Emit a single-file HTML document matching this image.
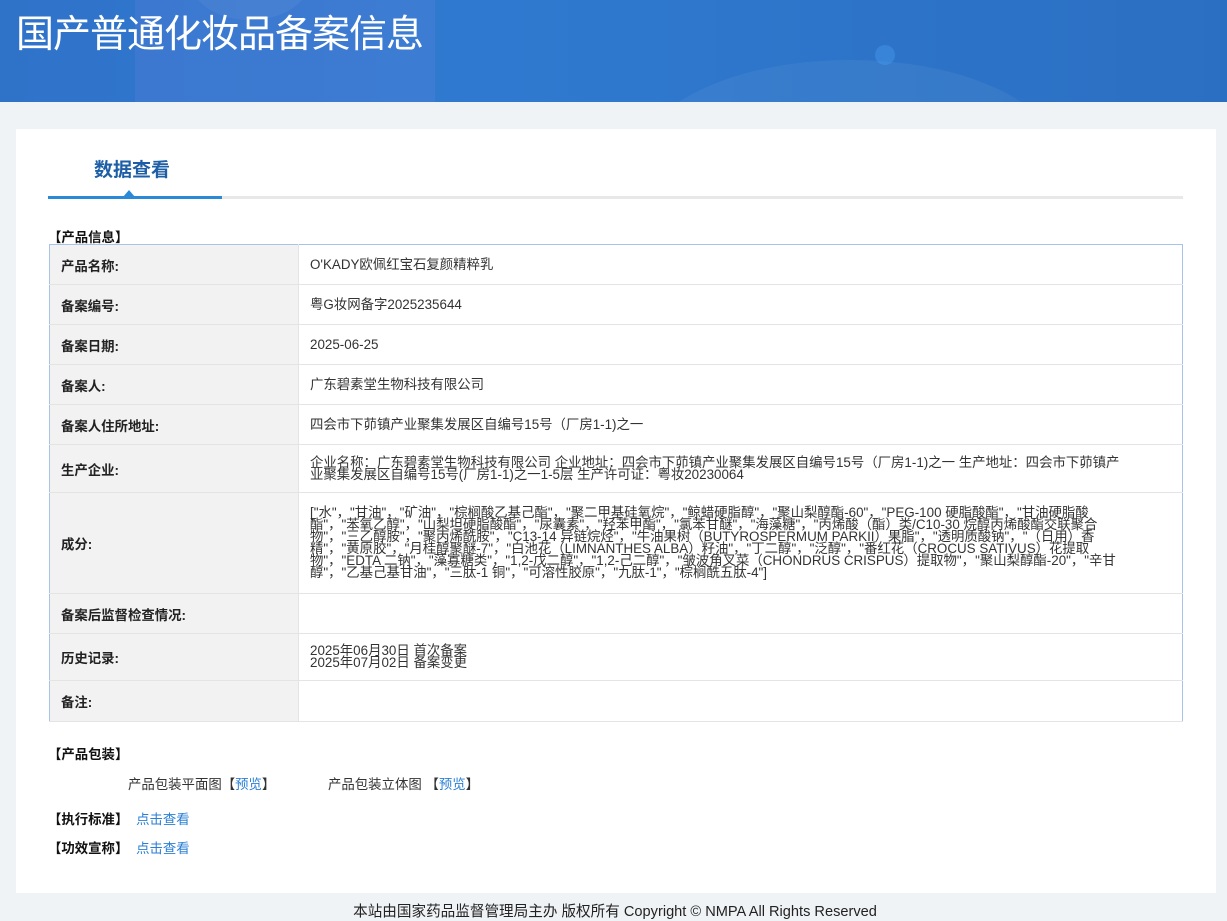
<!DOCTYPE html>
<html><head><meta charset="utf-8"><style>
*{margin:0;padding:0;box-sizing:border-box}
body{width:1227px;height:920px;background:#eff3f6;font-family:"Liberation Sans","Noto Sans CJK SC",sans-serif;font-size:13.4px;color:#333;position:relative;overflow:hidden}
.hd{position:absolute;left:0;top:0;width:1227px;height:102px;background:linear-gradient(90deg,#2f73c9 0%,#2f7ad0 40%,#2b6fc2 100%);overflow:hidden}
.hd h1{position:absolute;left:16px;top:3px;font-size:38px;font-weight:normal;color:#fff;letter-spacing:-1px;font-family:"Noto Sans CJK SC",sans-serif}
.blob{position:absolute;border-radius:50%;background:rgba(255,255,255,.05)}
.card{position:absolute;left:16px;top:129px;width:1200px;height:764px;background:#fff}
.tab{position:absolute;left:78px;top:26px;font-size:19px;font-weight:bold;color:#1d5ea6;font-family:"Noto Sans CJK SC",sans-serif}
.line{position:absolute;left:32px;top:67px;width:1135px;height:3px;background:#e8e8e8}
.line b{position:absolute;left:0;top:0;width:174px;height:3px;background:#2a8ad8}
.tri{position:absolute;left:107px;top:61px;width:0;height:0;border-left:6px solid transparent;border-right:6px solid transparent;border-bottom:7px solid #2a8ad8}
.st{position:absolute;left:32px;font-weight:bold;color:#111}
table{position:absolute;left:33px;top:115px;width:1134px;border-collapse:collapse;border:1px solid #a9c3e8}
td{border-bottom:1px solid #e4e4e4;vertical-align:middle;padding:0 11px}
td.l{width:249px;background:#f2f2f2;font-weight:bold;color:#222;border-right:1px solid #e4e4e4}
td.v{line-height:12px}
a{color:#2a7fd4;text-decoration:none}
.ft{position:absolute;top:900px;left:0;width:1227px;text-align:center;font-size:14.6px;color:#222;padding-left:3px}
</style></head><body>
<div class="hd">
<div class="blob" style="left:135px;top:-20px;width:300px;height:140px;border-radius:0;background:rgba(120,140,230,.18)"></div>
<div class="blob" style="left:190px;top:-60px;width:120px;height:80px"></div>
<div class="blob" style="left:640px;top:60px;width:420px;height:200px"></div>
<div class="blob" style="left:875px;top:45px;width:20px;height:20px;background:rgba(80,170,255,.3)"></div>
<h1>国产普通化妆品备案信息</h1>
</div>
<div class="card">
<div class="tab">数据查看</div>
<div class="line"><b></b></div>
<div class="tri"></div>
<div class="st" style="top:97px">【产品信息】</div>
<table>
<tr style="height:40px"><td class="l">产品名称:</td><td class="v">O'KADY欧佩红宝石复颜精粹乳</td></tr>
<tr style="height:40px"><td class="l">备案编号:</td><td class="v">粤G妆网备字2025235644</td></tr>
<tr style="height:40px"><td class="l">备案日期:</td><td class="v">2025-06-25</td></tr>
<tr style="height:40px"><td class="l">备案人:</td><td class="v">广东碧素堂生物科技有限公司</td></tr>
<tr style="height:40px"><td class="l">备案人住所地址:</td><td class="v">四会市下茆镇产业聚集发展区自编号15号（厂房1-1)之一</td></tr>
<tr style="height:48px"><td class="l">生产企业:</td><td class="v">企业名称：广东碧素堂生物科技有限公司 企业地址：四会市下茆镇产业聚集发展区自编号15号（厂房1-1)之一 生产地址：四会市下茆镇产<br>业聚集发展区自编号15号(厂房1-1)之一1-5层 生产许可证：粤妆20230064</td></tr>
<tr style="height:101px"><td class="l">成分:</td><td class="v">["水"，"甘油"，"矿油"，"棕榈酸乙基己酯"，"聚二甲基硅氧烷"，"鲸蜡硬脂醇"，"聚山梨醇酯-60"，"PEG-100 硬脂酸酯"，"甘油硬脂酸<br>酯"，"苯氧乙醇"，"山梨坦硬脂酸酯"，"尿囊素"，"羟苯甲酯"，"氯苯甘醚"，"海藻糖"，"丙烯酸（酯）类/C10-30 烷醇丙烯酸酯交联聚合<br>物"，"三乙醇胺"，"聚丙烯酰胺"，"C13-14 异链烷烃"，"牛油果树（BUTYROSPERMUM PARKII）果脂"，"透明质酸钠"，"（日用）香<br>精"，"黄原胶"，"月桂醇聚醚-7"，"白池花（LIMNANTHES ALBA）籽油"，"丁二醇"，"泛醇"，"番红花（CROCUS SATIVUS）花提取<br>物"，"EDTA 二钠"，"藻寡糖类"，"1,2-戊二醇"，"1,2-己二醇"，"皱波角叉菜（CHONDRUS CRISPUS）提取物"，"聚山梨醇酯-20"，"辛甘<br>醇"，"乙基己基甘油"，"三肽-1 铜"，"可溶性胶原"，"九肽-1"，"棕榈酰五肽-4"]</td></tr>
<tr style="height:40px"><td class="l">备案后监督检查情况:</td><td class="v"></td></tr>
<tr style="height:47px"><td class="l">历史记录:</td><td class="v">2025年06月30日 首次备案<br>2025年07月02日 备案变更</td></tr>
<tr style="height:41px"><td class="l">备注:</td><td class="v"></td></tr>
</table>
<div class="st" style="top:614px">【产品包装】</div>
<div style="position:absolute;left:112px;top:644px">产品包装平面图【<a>预览</a>】</div>
<div style="position:absolute;left:312px;top:644px">产品包装立体图 【<a>预览</a>】</div>
<div class="st" style="top:679px">【执行标准】 <a style="font-weight:normal;margin-left:4px">点击查看</a></div>
<div class="st" style="top:708px">【功效宣称】 <a style="font-weight:normal;margin-left:4px">点击查看</a></div>
</div>
<div class="ft">本站由国家药品监督管理局主办 版权所有 Copyright © NMPA All Rights Reserved</div>
</body></html>
